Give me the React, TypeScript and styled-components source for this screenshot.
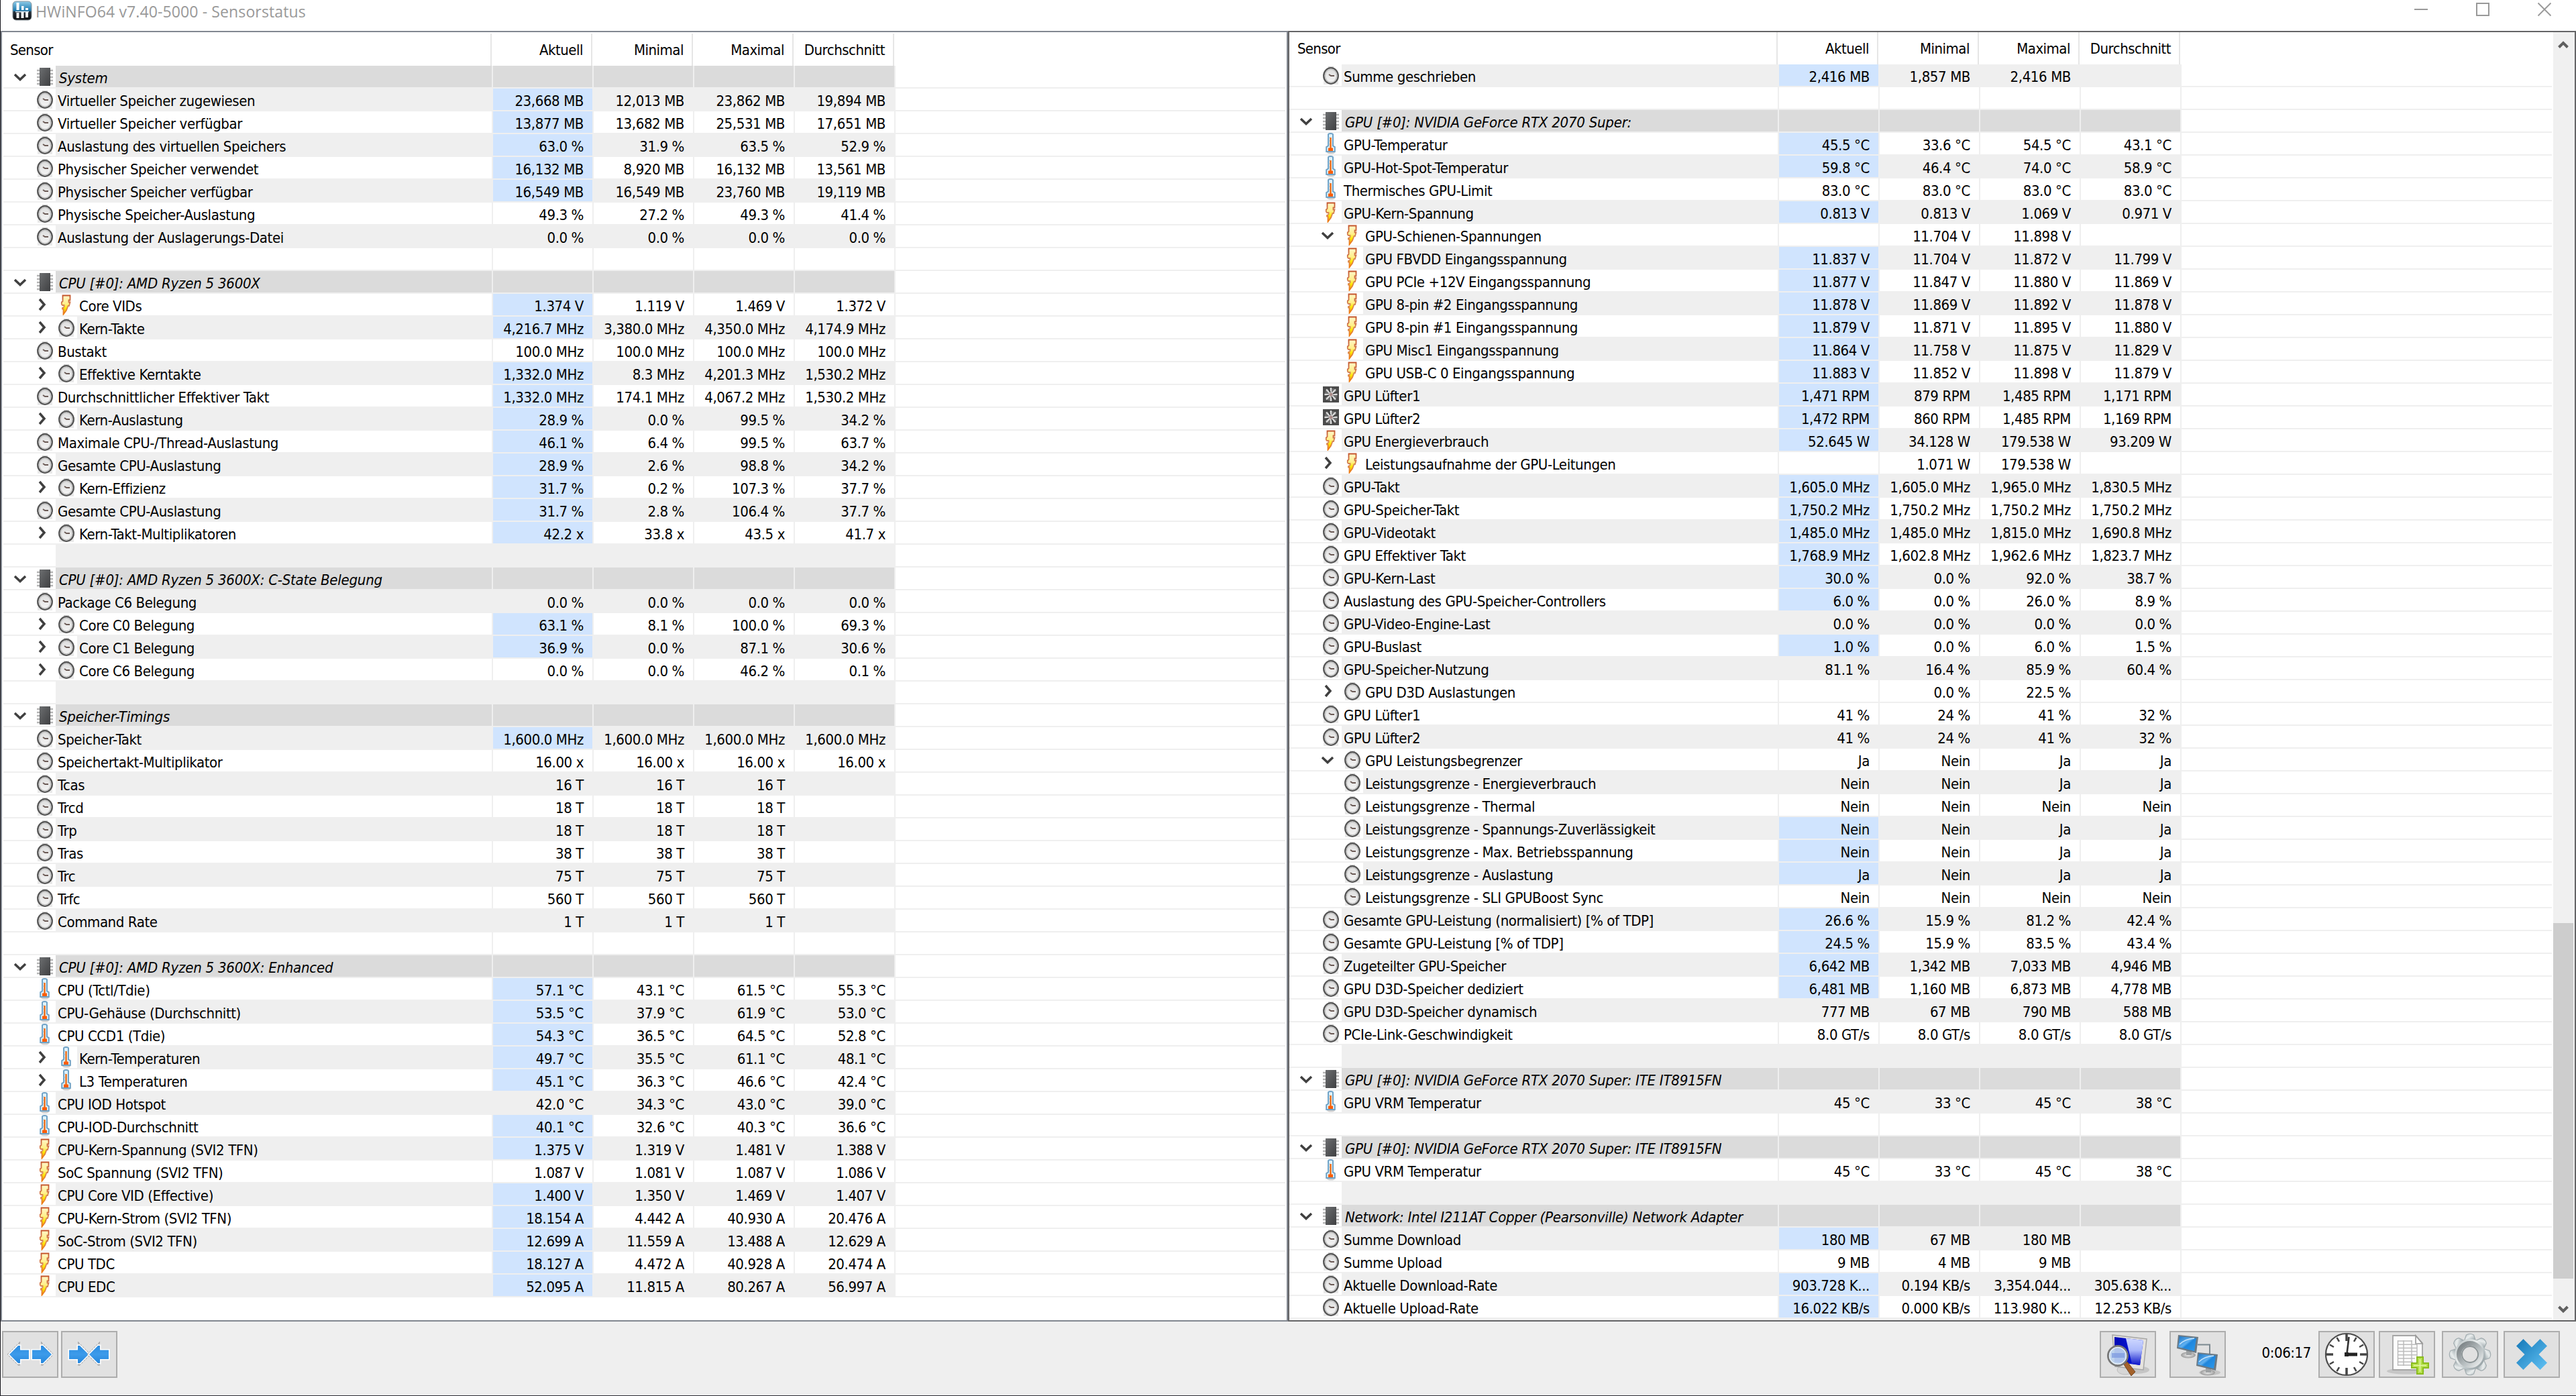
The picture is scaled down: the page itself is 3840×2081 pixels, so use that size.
import React from 'react';
import styled, { createGlobalStyle, css } from 'styled-components';

const GlobalStyle = createGlobalStyle`
  * { box-sizing: border-box; }
  body {
    margin: 0;
    background: #efefef;
    font-family: "DejaVu Sans Condensed", "DejaVu Sans", "Noto Sans", sans-serif;
    font-stretch: condensed;
    font-size: 22px;
    color: #000;
    overflow: hidden;
  }
`;

/* ---------- data ---------- */

type Icon = 'chip' | 'clock' | 'bolt' | 'thermo' | 'fan';
type Tree = 'open' | 'closed' | 'child' | '';
interface Item {
  kind: 'group' | 'blank' | 'value';
  icon?: Icon;
  tree?: Tree;
  name: string;
  hot?: boolean;
  values: string[];
}

const group = (name: string): Item => ({ kind: 'group', icon: 'chip', name, values: [] });
const blank: Item = { kind: 'blank', name: '', values: [] };
const row = (icon: Icon, tree: Tree, hot: number, name: string, values: string): Item => ({
  kind: 'value', icon, tree, hot: hot === 1, name, values: values.split('|'),
});

const leftItems: Item[] = [
  group('System'),
  row('clock', '', 1, 'Virtueller Speicher zugewiesen', '23,668 MB|12,013 MB|23,862 MB|19,894 MB'),
  row('clock', '', 1, 'Virtueller Speicher verfügbar', '13,877 MB|13,682 MB|25,531 MB|17,651 MB'),
  row('clock', '', 1, 'Auslastung des virtuellen Speichers', '63.0 %|31.9 %|63.5 %|52.9 %'),
  row('clock', '', 1, 'Physischer Speicher verwendet', '16,132 MB|8,920 MB|16,132 MB|13,561 MB'),
  row('clock', '', 1, 'Physischer Speicher verfügbar', '16,549 MB|16,549 MB|23,760 MB|19,119 MB'),
  row('clock', '', 0, 'Physische Speicher-Auslastung', '49.3 %|27.2 %|49.3 %|41.4 %'),
  row('clock', '', 0, 'Auslastung der Auslagerungs-Datei', '0.0 %|0.0 %|0.0 %|0.0 %'),
  blank,
  group('CPU [#0]: AMD Ryzen 5 3600X'),
  row('bolt', 'closed', 1, 'Core VIDs', '1.374 V|1.119 V|1.469 V|1.372 V'),
  row('clock', 'closed', 1, 'Kern-Takte', '4,216.7 MHz|3,380.0 MHz|4,350.0 MHz|4,174.9 MHz'),
  row('clock', '', 0, 'Bustakt', '100.0 MHz|100.0 MHz|100.0 MHz|100.0 MHz'),
  row('clock', 'closed', 1, 'Effektive Kerntakte', '1,332.0 MHz|8.3 MHz|4,201.3 MHz|1,530.2 MHz'),
  row('clock', '', 1, 'Durchschnittlicher Effektiver Takt', '1,332.0 MHz|174.1 MHz|4,067.2 MHz|1,530.2 MHz'),
  row('clock', 'closed', 1, 'Kern-Auslastung', '28.9 %|0.0 %|99.5 %|34.2 %'),
  row('clock', '', 1, 'Maximale CPU-/Thread-Auslastung', '46.1 %|6.4 %|99.5 %|63.7 %'),
  row('clock', '', 1, 'Gesamte CPU-Auslastung', '28.9 %|2.6 %|98.8 %|34.2 %'),
  row('clock', 'closed', 1, 'Kern-Effizienz', '31.7 %|0.2 %|107.3 %|37.7 %'),
  row('clock', '', 1, 'Gesamte CPU-Auslastung', '31.7 %|2.8 %|106.4 %|37.7 %'),
  row('clock', 'closed', 1, 'Kern-Takt-Multiplikatoren', '42.2 x|33.8 x|43.5 x|41.7 x'),
  blank,
  group('CPU [#0]: AMD Ryzen 5 3600X: C-State Belegung'),
  row('clock', '', 0, 'Package C6 Belegung', '0.0 %|0.0 %|0.0 %|0.0 %'),
  row('clock', 'closed', 1, 'Core C0 Belegung', '63.1 %|8.1 %|100.0 %|69.3 %'),
  row('clock', 'closed', 1, 'Core C1 Belegung', '36.9 %|0.0 %|87.1 %|30.6 %'),
  row('clock', 'closed', 0, 'Core C6 Belegung', '0.0 %|0.0 %|46.2 %|0.1 %'),
  blank,
  group('Speicher-Timings'),
  row('clock', '', 1, 'Speicher-Takt', '1,600.0 MHz|1,600.0 MHz|1,600.0 MHz|1,600.0 MHz'),
  row('clock', '', 0, 'Speichertakt-Multiplikator', '16.00 x|16.00 x|16.00 x|16.00 x'),
  row('clock', '', 0, 'Tcas', '16 T|16 T|16 T|'),
  row('clock', '', 0, 'Trcd', '18 T|18 T|18 T|'),
  row('clock', '', 0, 'Trp', '18 T|18 T|18 T|'),
  row('clock', '', 0, 'Tras', '38 T|38 T|38 T|'),
  row('clock', '', 0, 'Trc', '75 T|75 T|75 T|'),
  row('clock', '', 0, 'Trfc', '560 T|560 T|560 T|'),
  row('clock', '', 0, 'Command Rate', '1 T|1 T|1 T|'),
  blank,
  group('CPU [#0]: AMD Ryzen 5 3600X: Enhanced'),
  row('thermo', '', 1, 'CPU (Tctl/Tdie)', '57.1 °C|43.1 °C|61.5 °C|55.3 °C'),
  row('thermo', '', 1, 'CPU-Gehäuse (Durchschnitt)', '53.5 °C|37.9 °C|61.9 °C|53.0 °C'),
  row('thermo', '', 1, 'CPU CCD1 (Tdie)', '54.3 °C|36.5 °C|64.5 °C|52.8 °C'),
  row('thermo', 'closed', 1, 'Kern-Temperaturen', '49.7 °C|35.5 °C|61.1 °C|48.1 °C'),
  row('thermo', 'closed', 1, 'L3 Temperaturen', '45.1 °C|36.3 °C|46.6 °C|42.4 °C'),
  row('thermo', '', 0, 'CPU IOD Hotspot', '42.0 °C|34.3 °C|43.0 °C|39.0 °C'),
  row('thermo', '', 1, 'CPU-IOD-Durchschnitt', '40.1 °C|32.6 °C|40.3 °C|36.6 °C'),
  row('bolt', '', 1, 'CPU-Kern-Spannung (SVI2 TFN)', '1.375 V|1.319 V|1.481 V|1.388 V'),
  row('bolt', '', 0, 'SoC Spannung (SVI2 TFN)', '1.087 V|1.081 V|1.087 V|1.086 V'),
  row('bolt', '', 1, 'CPU Core VID (Effective)', '1.400 V|1.350 V|1.469 V|1.407 V'),
  row('bolt', '', 1, 'CPU-Kern-Strom (SVI2 TFN)', '18.154 A|4.442 A|40.930 A|20.476 A'),
  row('bolt', '', 1, 'SoC-Strom (SVI2 TFN)', '12.699 A|11.559 A|13.488 A|12.629 A'),
  row('bolt', '', 1, 'CPU TDC', '18.127 A|4.472 A|40.928 A|20.474 A'),
  row('bolt', '', 1, 'CPU EDC', '52.095 A|11.815 A|80.267 A|56.997 A'),
];

const rightItems: Item[] = [
  row('clock', '', 1, 'Summe geschrieben', '2,416 MB|1,857 MB|2,416 MB|'),
  blank,
  group('GPU [#0]: NVIDIA GeForce RTX 2070 Super:'),
  row('thermo', '', 1, 'GPU-Temperatur', '45.5 °C|33.6 °C|54.5 °C|43.1 °C'),
  row('thermo', '', 1, 'GPU-Hot-Spot-Temperatur', '59.8 °C|46.4 °C|74.0 °C|58.9 °C'),
  row('thermo', '', 0, 'Thermisches GPU-Limit', '83.0 °C|83.0 °C|83.0 °C|83.0 °C'),
  row('bolt', '', 1, 'GPU-Kern-Spannung', '0.813 V|0.813 V|1.069 V|0.971 V'),
  row('bolt', 'open', 0, 'GPU-Schienen-Spannungen', '|11.704 V|11.898 V|'),
  row('bolt', 'child', 1, 'GPU FBVDD Eingangsspannung', '11.837 V|11.704 V|11.872 V|11.799 V'),
  row('bolt', 'child', 1, 'GPU PCIe +12V Eingangsspannung', '11.877 V|11.847 V|11.880 V|11.869 V'),
  row('bolt', 'child', 1, 'GPU 8-pin #2 Eingangsspannung', '11.878 V|11.869 V|11.892 V|11.878 V'),
  row('bolt', 'child', 1, 'GPU 8-pin #1 Eingangsspannung', '11.879 V|11.871 V|11.895 V|11.880 V'),
  row('bolt', 'child', 1, 'GPU Misc1 Eingangsspannung', '11.864 V|11.758 V|11.875 V|11.829 V'),
  row('bolt', 'child', 1, 'GPU USB-C 0 Eingangsspannung', '11.883 V|11.852 V|11.898 V|11.879 V'),
  row('fan', '', 1, 'GPU Lüfter1', '1,471 RPM|879 RPM|1,485 RPM|1,171 RPM'),
  row('fan', '', 1, 'GPU Lüfter2', '1,472 RPM|860 RPM|1,485 RPM|1,169 RPM'),
  row('bolt', '', 1, 'GPU Energieverbrauch', '52.645 W|34.128 W|179.538 W|93.209 W'),
  row('bolt', 'closed', 0, 'Leistungsaufnahme der GPU-Leitungen', '|1.071 W|179.538 W|'),
  row('clock', '', 1, 'GPU-Takt', '1,605.0 MHz|1,605.0 MHz|1,965.0 MHz|1,830.5 MHz'),
  row('clock', '', 1, 'GPU-Speicher-Takt', '1,750.2 MHz|1,750.2 MHz|1,750.2 MHz|1,750.2 MHz'),
  row('clock', '', 1, 'GPU-Videotakt', '1,485.0 MHz|1,485.0 MHz|1,815.0 MHz|1,690.8 MHz'),
  row('clock', '', 1, 'GPU Effektiver Takt', '1,768.9 MHz|1,602.8 MHz|1,962.6 MHz|1,823.7 MHz'),
  row('clock', '', 1, 'GPU-Kern-Last', '30.0 %|0.0 %|92.0 %|38.7 %'),
  row('clock', '', 1, 'Auslastung des GPU-Speicher-Controllers', '6.0 %|0.0 %|26.0 %|8.9 %'),
  row('clock', '', 0, 'GPU-Video-Engine-Last', '0.0 %|0.0 %|0.0 %|0.0 %'),
  row('clock', '', 1, 'GPU-Buslast', '1.0 %|0.0 %|6.0 %|1.5 %'),
  row('clock', '', 0, 'GPU-Speicher-Nutzung', '81.1 %|16.4 %|85.9 %|60.4 %'),
  row('clock', 'closed', 0, 'GPU D3D Auslastungen', '|0.0 %|22.5 %|'),
  row('clock', '', 0, 'GPU Lüfter1', '41 %|24 %|41 %|32 %'),
  row('clock', '', 0, 'GPU Lüfter2', '41 %|24 %|41 %|32 %'),
  row('clock', 'open', 0, 'GPU Leistungsbegrenzer', 'Ja|Nein|Ja|Ja'),
  row('clock', 'child', 0, 'Leistungsgrenze - Energieverbrauch', 'Nein|Nein|Ja|Ja'),
  row('clock', 'child', 0, 'Leistungsgrenze - Thermal', 'Nein|Nein|Nein|Nein'),
  row('clock', 'child', 1, 'Leistungsgrenze - Spannungs-Zuverlässigkeit', 'Nein|Nein|Ja|Ja'),
  row('clock', 'child', 1, 'Leistungsgrenze - Max. Betriebsspannung', 'Nein|Nein|Ja|Ja'),
  row('clock', 'child', 1, 'Leistungsgrenze - Auslastung', 'Ja|Nein|Ja|Ja'),
  row('clock', 'child', 0, 'Leistungsgrenze - SLI GPUBoost Sync', 'Nein|Nein|Nein|Nein'),
  row('clock', '', 1, 'Gesamte GPU-Leistung (normalisiert) [% of TDP]', '26.6 %|15.9 %|81.2 %|42.4 %'),
  row('clock', '', 1, 'Gesamte GPU-Leistung [% of TDP]', '24.5 %|15.9 %|83.5 %|43.4 %'),
  row('clock', '', 1, 'Zugeteilter GPU-Speicher', '6,642 MB|1,342 MB|7,033 MB|4,946 MB'),
  row('clock', '', 1, 'GPU D3D-Speicher dediziert', '6,481 MB|1,160 MB|6,873 MB|4,778 MB'),
  row('clock', '', 0, 'GPU D3D-Speicher dynamisch', '777 MB|67 MB|790 MB|588 MB'),
  row('clock', '', 0, 'PCIe-Link-Geschwindigkeit', '8.0 GT/s|8.0 GT/s|8.0 GT/s|8.0 GT/s'),
  blank,
  group('GPU [#0]: NVIDIA GeForce RTX 2070 Super: ITE IT8915FN'),
  row('thermo', '', 0, 'GPU VRM Temperatur', '45 °C|33 °C|45 °C|38 °C'),
  blank,
  group('GPU [#0]: NVIDIA GeForce RTX 2070 Super: ITE IT8915FN'),
  row('thermo', '', 0, 'GPU VRM Temperatur', '45 °C|33 °C|45 °C|38 °C'),
  blank,
  group('Network: Intel I211AT Copper (Pearsonville) Network Adapter'),
  row('clock', '', 1, 'Summe Download', '180 MB|67 MB|180 MB|'),
  row('clock', '', 0, 'Summe Upload', '9 MB|4 MB|9 MB|'),
  row('clock', '', 1, 'Aktuelle Download-Rate', '903.728 K...|0.194 KB/s|3,354.044...|305.638 K...'),
  row('clock', '', 1, 'Aktuelle Upload-Rate', '16.022 KB/s|0.000 KB/s|113.980 K...|12.253 KB/s'),
  blank,
];

/* ---------- layout ---------- */

const Window = styled.div`
  width: 3840px;
  height: 2081px;
  display: flex;
  flex-direction: column;
  background: #efefef;
  border-left: 1px solid #16161c;
  border-bottom: 1px solid #2c2c34;
  overflow: hidden;
`;

const TitleBar = styled.header`
  height: 46px;
  flex: none;
  display: flex;
  justify-content: space-between;
  background: #fff;
`;

const TitleText = styled.div`
  display: flex;
  padding: 1px 0 0 17px;
  gap: 5px;
  font-family: "Open Sans", "Noto Sans", sans-serif;
  font-stretch: normal;
  font-size: 23px;
  line-height: 32px;
  letter-spacing: 0.12px;
  color: #999;
  white-space: pre;
`;

const WindowButtons = styled.div`
  display: flex;
  gap: 70px;
  padding: 3px 36px 0 0;
  svg { display: block; width: 22px; height: 22px; }
`;

const Panes = styled.main`
  height: 1924px;
  flex: none;
  display: flex;
`;

const Pane = styled.section<{ $dark?: boolean }>`
  width: ${p => (p.$dark ? 1920 : 1919)}px;
  flex: none;
  display: flex;
  background: #fff;
  border: 2px solid ${p => (p.$dark ? '#646466' : '#828790')};
  overflow: hidden;
`;

const List = styled.div<{ $inset: number }>`
  flex: 1;
  min-width: 0;
  padding-left: ${p => p.$inset}px;
  padding-right: 2px;
`;

const HeaderRow = styled.div<{ $inset: number }>`
  display: flex;
  height: ${p => 48 + p.$inset}px;
  padding-top: ${p => p.$inset}px;
  line-height: 49px;
`;

const HeadName = styled.div<{ $inset: number }>`
  width: 728px;
  padding-left: ${p => 12 - p.$inset}px;
  border-right: 2px solid #e6e6e6;
  letter-spacing: -0.7px;
`;

const HeadCell = styled.div`
  width: 150px;
  padding-right: 12px;
  border-right: 2px solid #e6e6e6;
  text-align: right;
  letter-spacing: -0.5px;
`;

const Row = styled.div`
  display: flex;
  height: 34px;
  border-bottom: 2px solid #efefef;
`;

type Tone = 'plain' | 'striped' | 'group';
const tones: Record<Tone, string> = { plain: '#fff', striped: '#efefef', group: '#dbdbdb' };

const NameCell = styled.div`
  width: 728px;
  flex: none;
  display: flex;
`;

const Gutter = styled.div<{ $indent: boolean }>`
  width: ${p => (p.$indent ? 110 : 78)}px;
  flex: none;
  display: flex;
  padding-left: ${p => (p.$indent ? 48 : 16)}px;
  svg { display: block; flex: none; }
`;

const Toggle = styled.span`
  width: 34px;
  height: 32px;
`;

const Label = styled.div<{ $tone: Tone }>`
  flex: 1;
  padding-left: 3px;
  line-height: 37px;
  white-space: pre;
  letter-spacing: -0.4px;
  background: ${p => tones[p.$tone]};
  ${p => p.$tone === 'group' && css`font-style: italic; letter-spacing: -0.23px; padding-left: 5px;`}
`;

const ValueCell = styled.div<{ $tone: Tone; $hot?: boolean }>`
  width: 150px;
  flex: none;
  padding-right: 13px;
  border-left: 2px solid #efefef;
  line-height: 37px;
  text-align: right;
  white-space: pre;
  letter-spacing: -0.4px;
  background: ${p => (p.$hot ? '#d0e4fe' : tones[p.$tone])};
`;

const EndRule = styled.div`
  width: 2px;
  background: #efefef;
`;

const ScrollBar = styled.div`
  width: 32px;
  flex: none;
  display: flex;
  flex-direction: column;
  background: #f0f0f0;
  svg { display: block; flex: none; margin-left: 7px; }
`;

const Thumb = styled.div`
  width: 30px;
  height: 530px;
  flex: none;
  margin-top: 1302px;
  margin-bottom: auto;
  background: #cdcdcd;
`;

const ToolBar = styled.footer`
  flex: 1;
  display: flex;
  align-items: flex-start;
  padding: 14px 24px 0 2px;
`;

const ToolButton = styled.button<{ $gap?: number }>`
  width: 84px;
  height: 70px;
  flex: none;
  padding: 0;
  margin-left: ${p => p.$gap ?? 0}px;
  display: flex;
  align-items: center;
  justify-content: center;
  background: #e1e1e1;
  border: 2px solid #adadad;
  svg { display: block; flex: none; }
`;

const Spacer = styled.div`
  flex: 1;
`;

const Elapsed = styled.div`
  width: 138px;
  padding-right: 11px;
  text-align: right;
  line-height: 65px;
  letter-spacing: -0.4px;
`;

/* ---------- icons ---------- */

const Chevron = ({ dir }: { dir: 'down' | 'right' }) => (
  <svg width="34" height="32" viewBox="0 0 34 32" fill="none" stroke="#404040" strokeWidth="3.500">
    <path d={dir === 'down' ? 'M1 13l8 7.5 8-7.5' : 'M6 8l7 8-7 8'} />
  </svg>
);

const ChipIcon = () => (
  <svg width="24" height="32" viewBox="0 0 24 32">
    <path d="M0 7h24M0 12h24M0 17h24M0 22h24M0 27h24" stroke="#b4b4b4" strokeWidth="2.4" />
    <rect x="4" y="3" width="16" height="27" fill="url(#chipFill)" />
  </svg>
);

const ClockIcon = () => (
  <svg width="24" height="32" viewBox="0 0 24 32">
    <path d="M8 3h8v3H8z" fill="#cfcfcf" />
    <rect x="1" y="24" width="22" height="6" fill="#e9e9e9" />
    <ellipse cx="12" cy="17" rx="10.8" ry="11.8" fill="url(#dial)" stroke="#555" strokeWidth="2.3" />
    <ellipse cx="12" cy="17" rx="8.6" ry="9.6" fill="none" stroke="#c0c0c0" strokeWidth="1.2" />
    <path d="M9 15l3 2h5" fill="none" stroke="#6b5a55" strokeWidth="1.9" />
  </svg>
);

const BoltIcon = () => (
  <svg width="24" height="32" viewBox="0 0 24 32">
    <path
      d="M6.500 2.500H17.500V9.500H15.500V12.500H17.500L16 18H14.500L12 24.500 7.500 30.500V22.500H6V21L8.500 19.500V17H6L4.800 15.500V12.500L6.500 11V8Z"
      fill="url(#boltFill)" stroke="url(#boltEdge)" strokeWidth="1.800"
    />
  </svg>
);

const ThermoIcon = () => (
  <svg width="24" height="32" viewBox="0 0 24 32">
    <ellipse cx="12" cy="29.5" rx="6" ry="2" fill="#cfcfcf" />
    <path d="M8 2.5Q8 1 11.500 1 15 1 15 2.500V19.500L17.800 21V28H5.200V21L8 19.500Z" fill="#dff2fc" stroke="#6fa2c6" strokeWidth="2" />
    <path d="M11.500 7v16" stroke="#f0690f" strokeWidth="2.400" />
    <path d="M8 22.500h7V27H8z" fill="#fb5d06" />
    <path d="M7.500 7h3M7.500 12h3M7.500 17h3" stroke="#8bb7d4" strokeWidth="1" />
  </svg>
);

const FanIcon = () => (
  <svg width="24" height="32" viewBox="0 0 24 32">
    <rect x="0" y="4" width="24" height="24" fill="#4c4c4c" />
    <circle cx="12" cy="16" r="9.500" fill="#6e6e6e" />
    <path d="M12 6v20M2.500 16h19M5 8.500l14 15M19 8.500l-14 15" stroke="#dcdcdc" strokeWidth="2.200" />
    <path d="M8 6l3 7M22 12l-7 3M16 26l-3-7M2 20l7-3" stroke="#3d3d3d" strokeWidth="1.800" />
    <circle cx="12" cy="16" r="2.600" fill="#a98b88" />
  </svg>
);

const rowIcons: Record<Icon, () => React.JSX.Element> = {
  chip: ChipIcon, clock: ClockIcon, bolt: BoltIcon, thermo: ThermoIcon, fan: FanIcon,
};

const SharedDefs = () => (
  <svg width="0" height="0" style={{ position: 'absolute' }}>
    <defs>
      <linearGradient id="chipFill" x1="0" y1="0" x2="1" y2="1">
        <stop offset="0" stopColor="#6c6e70" /><stop offset="1" stopColor="#3f4042" />
      </linearGradient>
      <linearGradient id="dial" x1="0" y1="0" x2="0" y2="1">
        <stop offset="0" stopColor="#dcdcdc" /><stop offset="1" stopColor="#f6f6f6" />
      </linearGradient>
      <linearGradient id="boltFill" x1="0" y1="0" x2="0" y2="1">
        <stop offset="0" stopColor="#fff6c8" /><stop offset=".45" stopColor="#ffef8a" />
        <stop offset=".68" stopColor="#ffea00" /><stop offset="1" stopColor="#f58a10" />
      </linearGradient>
      <linearGradient id="boltEdge" x1="0" y1="0" x2="0" y2="1">
        <stop offset="0" stopColor="#c4562c" /><stop offset=".6" stopColor="#d98a5a" /><stop offset="1" stopColor="#ee7a10" />
      </linearGradient>
      <linearGradient id="arrowFill" x1="0" y1="0" x2="0" y2="1">
        <stop offset="0" stopColor="#2b8ce0" /><stop offset=".5" stopColor="#3d9bea" /><stop offset="1" stopColor="#2586dc" />
      </linearGradient>
      <linearGradient id="crossFill" x1="0" y1="0" x2="1" y2="1">
        <stop offset="0" stopColor="#1478b8" /><stop offset="1" stopColor="#62c2f4" />
      </linearGradient>
      <linearGradient id="screenDeep" x1="0" y1="0" x2="1" y2="0">
        <stop offset="0" stopColor="#0008b4" /><stop offset="1" stopColor="#0a1ee6" />
      </linearGradient>
      <linearGradient id="screenLight" x1="0" y1="0" x2="0" y2="1">
        <stop offset="0" stopColor="#cfd8ff" /><stop offset=".45" stopColor="#aab8fb" /><stop offset="1" stopColor="#0a12c8" />
      </linearGradient>
      <linearGradient id="screenBlue" x1="0" y1="0" x2="1" y2="1">
        <stop offset="0" stopColor="#1b74c4" /><stop offset=".45" stopColor="#5fb0f0" />
        <stop offset=".55" stopColor="#1f86dc" /><stop offset="1" stopColor="#2a9aee" />
      </linearGradient>
      <linearGradient id="metal" x1="0" y1="0" x2="1" y2="1">
        <stop offset="0" stopColor="#b3bcbf" /><stop offset=".4" stopColor="#e9eded" />
        <stop offset=".7" stopColor="#b4bdc0" /><stop offset="1" stopColor="#7f8b8f" />
      </linearGradient>
      <linearGradient id="metalRing" x1="0" y1="0" x2="1" y2="1">
        <stop offset="0" stopColor="#757c7f" /><stop offset=".6" stopColor="#b9c0c2" /><stop offset="1" stopColor="#eef0f0" />
      </linearGradient>
      <linearGradient id="logoTop" x1="0" y1="0" x2="0" y2="1">
        <stop offset="0" stopColor="#8ecbe8" /><stop offset=".5" stopColor="#1b78ad" />
        <stop offset=".56" stopColor="#26303a" /><stop offset="1" stopColor="#0b0b0d" />
      </linearGradient>
      <radialGradient id="standFill">
        <stop offset="0" stopColor="#f2f2f2" /><stop offset="1" stopColor="#9a9a9a" />
      </radialGradient>
    </defs>
  </svg>
);

const LogoIcon = () => (
  <svg width="30" height="30" viewBox="0 0 30 30">
    <rect x="1" y="1" width="28" height="28" rx="5" fill="url(#logoTop)" stroke="#8d979d" strokeWidth="1" />
    <path d="M6.500 3h4v11h-4zM14 8h3.500v6H14zM20 11h4v3h-4z" fill="#fff" />
    <path d="M6.500 18h4v8h-4zM13.500 17h4v9h-4zM20 17h4v8h-4z" fill="#f4f4f4" />
    <path d="M5 16.500h20" stroke="#e4eef4" strokeWidth="1.500" />
  </svg>
);

/* Each arrow is a dotted grey edge, a white halo and the blue body on top. */
const RIGHT_EDGE = 'M14 12V2L31 19 14 36V26';
const RIGHT_BODY = 'M0 12.500h13V6h3L29 19 16 32h-3v-6H0z';

const Arrow = ({ x, flip }: { x: number; flip?: boolean }) => (
  <g transform={flip ? `translate(${x + 29} 1) scale(-1 1)` : `translate(${x} 1)`}>
    <path d={RIGHT_EDGE} fill="none" stroke="#a9a9a9" strokeWidth="2" strokeDasharray="3 1.500" />
    <path d={RIGHT_BODY} fill="#fff" stroke="#fff" strokeWidth="3" />
    <path d={RIGHT_BODY} fill="url(#arrowFill)" />
  </g>
);

const ArrowPair = ({ inward }: { inward?: boolean }) => (
  <svg width="68" height="40" viewBox="0 0 68 40">
    <Arrow x={inward ? 4 : 3} flip={!inward} />
    <Arrow x={inward ? 34 : 37} flip={inward} />
  </svg>
);

const InspectIcon = () => (
  <svg width="80" height="66" viewBox="0 0 80 66">
    <ellipse cx="52" cy="56" rx="20" ry="6" fill="#c5c5c5" />
    <ellipse cx="36" cy="56" rx="12" ry="7" fill="#d6d6d6" stroke="#bdbdbd" />
    <path d="M17 4l51 6-5 46-42-5z" fill="#e6e3de" stroke="#a7a7a7" strokeWidth="1.500" />
    <path d="M20 7l43 5-5 37-38-5z" fill="url(#screenDeep)" />
    <path d="M37 9l26 3-5 37-12-2z" fill="url(#screenLight)" />
    <path d="M34 48l5-4 12 15-6 6z" fill="#a4622b" stroke="#6f4525" strokeWidth="1" />
    <circle cx="25" cy="35" r="14.500" fill="#bcd3ef" fillOpacity=".93" stroke="#777" strokeWidth="3" />
    <circle cx="25" cy="35" r="12.500" fill="none" stroke="#e8f1f8" strokeWidth="1.500" />
    <path d="M16 31h19v7H16z" fill="#7e9be0" opacity=".75" />
  </svg>
);

const Monitor = ({ x, y }: { x: number; y: number }) => (
  <g transform={`translate(${x} ${y})`}>
    <ellipse cx="17" cy="30" rx="11" ry="4.500" fill="url(#standFill)" />
    <path d="M14 23h8v7h-8z" fill="#9ea1a3" />
    <path d="M2 0l30 3-3 24L0 20z" fill="#6b7984" />
    <path d="M4 2l25 3-3 19L2 18z" fill="url(#screenBlue)" />
    <path d="M4 14Q12 6 26 5" fill="none" stroke="#c7e4fb" strokeWidth="1.500" />
  </g>
);

const NetworkIcon = () => (
  <svg width="80" height="66" viewBox="0 0 80 66">
    <path d="M40 18.500h18V32" fill="none" stroke="#7d8990" strokeWidth="2" />
    <ellipse cx="58" cy="60" rx="16" ry="4" fill="#c4c4c4" />
    <Monitor x={9} y={4} />
    <Monitor x={38} y={30} />
  </svg>
);

const BigClockIcon = () => (
  <svg width="66" height="66" viewBox="-33 -33 66 66">
    <circle r="31" fill="#fff" stroke="#4c4c4c" strokeWidth="2.200" />
    {Array.from({ length: 12 }, (_, i) => (
      <path
        key={i}
        d={i % 3 === 0 ? 'M0 -30v10' : 'M0 -29v7'}
        stroke="#444" strokeWidth={i % 3 === 0 ? 3.5 : 2.5}
        transform={`rotate(${i * 30})`}
      />
    ))}
    <path d="M0 0h16" stroke="#222" strokeWidth="5" />
    <path d="M0 3L3.500 -26" stroke="#333" strokeWidth="2.600" />
    <rect x="-3" y="-3" width="6" height="6" fill="#222" />
  </svg>
);

const ReportIcon = () => (
  <svg width="80" height="66" viewBox="0 0 80 66">
    <ellipse cx="38" cy="58" rx="28" ry="4.500" fill="#c6c6c6" />
    <path d="M19 5h34l10 11v40H19z" fill="#fdfdfd" stroke="#a5a5a5" strokeWidth="1.800" />
    <path d="M53 5v12h10z" fill="#fff" stroke="#999" strokeWidth="1.600" />
    <path d="M26 13h22M26 18.200h29M26 23.400h29M26 28.600h29M26 33.800h29M26 39h26M26 44.200h23M26 49h20M26.500 12v38M35 12v38M47 12v36M55 18v20" stroke="#bcbcbc" strokeWidth="1.500" fill="none" />
    <path d="M55 37h9v9h8v7h-8v9h-9v-9h-8v-7h8z" fill="#b4e04a" stroke="#8abb1e" strokeWidth="2" />
    <path d="M59.500 40v19M50 49.500h19" stroke="#e3f7a8" strokeWidth="1.600" />
  </svg>
);

const GearIcon = () => (
  <svg width="66" height="66" viewBox="-33 -33 66 66">
    <g fill="url(#metal)" stroke="#a3adb0" strokeWidth="1.200">
      {Array.from({ length: 8 }, (_, i) => (
        <path key={i} d="M-9 -19L-5.500 -29Q0 -32.500 5.500 -29L9 -19z" transform={`rotate(${i * 45})`} />
      ))}
    </g>
    <circle r="23" fill="url(#metal)" />
    <circle r="16.500" fill="none" stroke="url(#metalRing)" strokeWidth="7" />
    <circle r="12" fill="#e1e1e1" stroke="#8b9395" strokeWidth="1.800" />
  </svg>
);

const CrossIcon = () => (
  <svg width="48" height="48" viewBox="0 0 48 48">
    <path
      d="M1 11.500L11.500 1 24 13.500 36.500 1 47 11.500 34.500 24 47 36.500 36.500 47 24 34.500 11.500 47 1 36.500 13.500 24z"
      fill="url(#crossFill)"
    />
  </svg>
);

/* ---------- composition ---------- */

const columns = ['Aktuell', 'Minimal', 'Maximal', 'Durchschnitt'];

const ListRow = ({ item, striped }: { item: Item; striped: boolean }) => {
  const tone: Tone = item.kind === 'group' ? 'group' : striped ? 'striped' : 'plain';
  const RowIcon = item.icon && rowIcons[item.icon];
  const toggle = item.kind === 'group' || item.tree === 'open' ? 'down' : item.tree === 'closed' ? 'right' : null;
  return (
    <Row>
      <NameCell>
        <Gutter $indent={Boolean(item.tree)}>
          <Toggle>{toggle && <Chevron dir={toggle} />}</Toggle>
          {RowIcon && <RowIcon />}
        </Gutter>
        <Label $tone={tone}>{item.name}</Label>
      </NameCell>
      {columns.map((c, i) => (
        <ValueCell key={c} $tone={tone} $hot={item.hot && i === 0}>{item.values[i] ?? ''}</ValueCell>
      ))}
      <EndRule />
    </Row>
  );
};

const SensorList = ({ items, inset, striped }: { items: Item[]; inset: number; striped: (i: number) => boolean }) => (
  <List $inset={inset}>
    <HeaderRow $inset={inset}>
      <HeadName $inset={inset}>Sensor</HeadName>
      {columns.map(c => <HeadCell key={c}>{c}</HeadCell>)}
    </HeaderRow>
    {items.map((item, i) => <ListRow key={i} item={item} striped={striped(i)} />)}
  </List>
);

export default function App() {
  return (
    <>
      <GlobalStyle />
      <SharedDefs />
      <Window>
        <TitleBar>
          <TitleText><LogoIcon />HWiNFO64 v7.40-5000 - Sensorstatus</TitleText>
          <WindowButtons>
            <svg viewBox="0 0 22 22"><path d="M1 11h20" stroke="#999" strokeWidth="2" /></svg>
            <svg viewBox="0 0 22 22"><rect x="2" y="2" width="18" height="18" fill="none" stroke="#999" strokeWidth="2" /></svg>
            <svg viewBox="0 0 22 22"><path d="M1.500 1.500l19 19M20.500 1.500l-19 19" stroke="#999" strokeWidth="1.800" /></svg>
          </WindowButtons>
        </TitleBar>
        <Panes>
          <Pane>
            <SensorList items={leftItems} inset={2} striped={i => i % 2 === 1} />
          </Pane>
          <Pane $dark>
            {/* Collapsed children shift the striping after the D3D group. */}
            <SensorList items={rightItems} inset={0} striped={i => (i < 28 ? i % 2 === 0 : i % 2 === 1)} />
            <ScrollBar>
              <svg width="16" height="26" viewBox="0 0 16 26"><path d="M1.500 22.500L8 16l6.500 6.500" fill="none" stroke="#5f5f5f" strokeWidth="4" /></svg>
              <Thumb />
              <svg width="16" height="24" viewBox="0 0 16 24"><path d="M1.500 4L8 10.500 14.500 4" fill="none" stroke="#5f5f5f" strokeWidth="4" /></svg>
            </ScrollBar>
          </Pane>
        </Panes>
        <ToolBar>
          <ToolButton><ArrowPair /></ToolButton>
          <ToolButton $gap={4}><ArrowPair inward /></ToolButton>
          <Spacer />
          <ToolButton><InspectIcon /></ToolButton>
          <ToolButton $gap={20}><NetworkIcon /></ToolButton>
          <Elapsed>0:06:17</Elapsed>
          <ToolButton><BigClockIcon /></ToolButton>
          <ToolButton $gap={6}><ReportIcon /></ToolButton>
          <ToolButton $gap={10}><GearIcon /></ToolButton>
          <ToolButton $gap={8}><CrossIcon /></ToolButton>
        </ToolBar>
      </Window>
    </>
  );
}
